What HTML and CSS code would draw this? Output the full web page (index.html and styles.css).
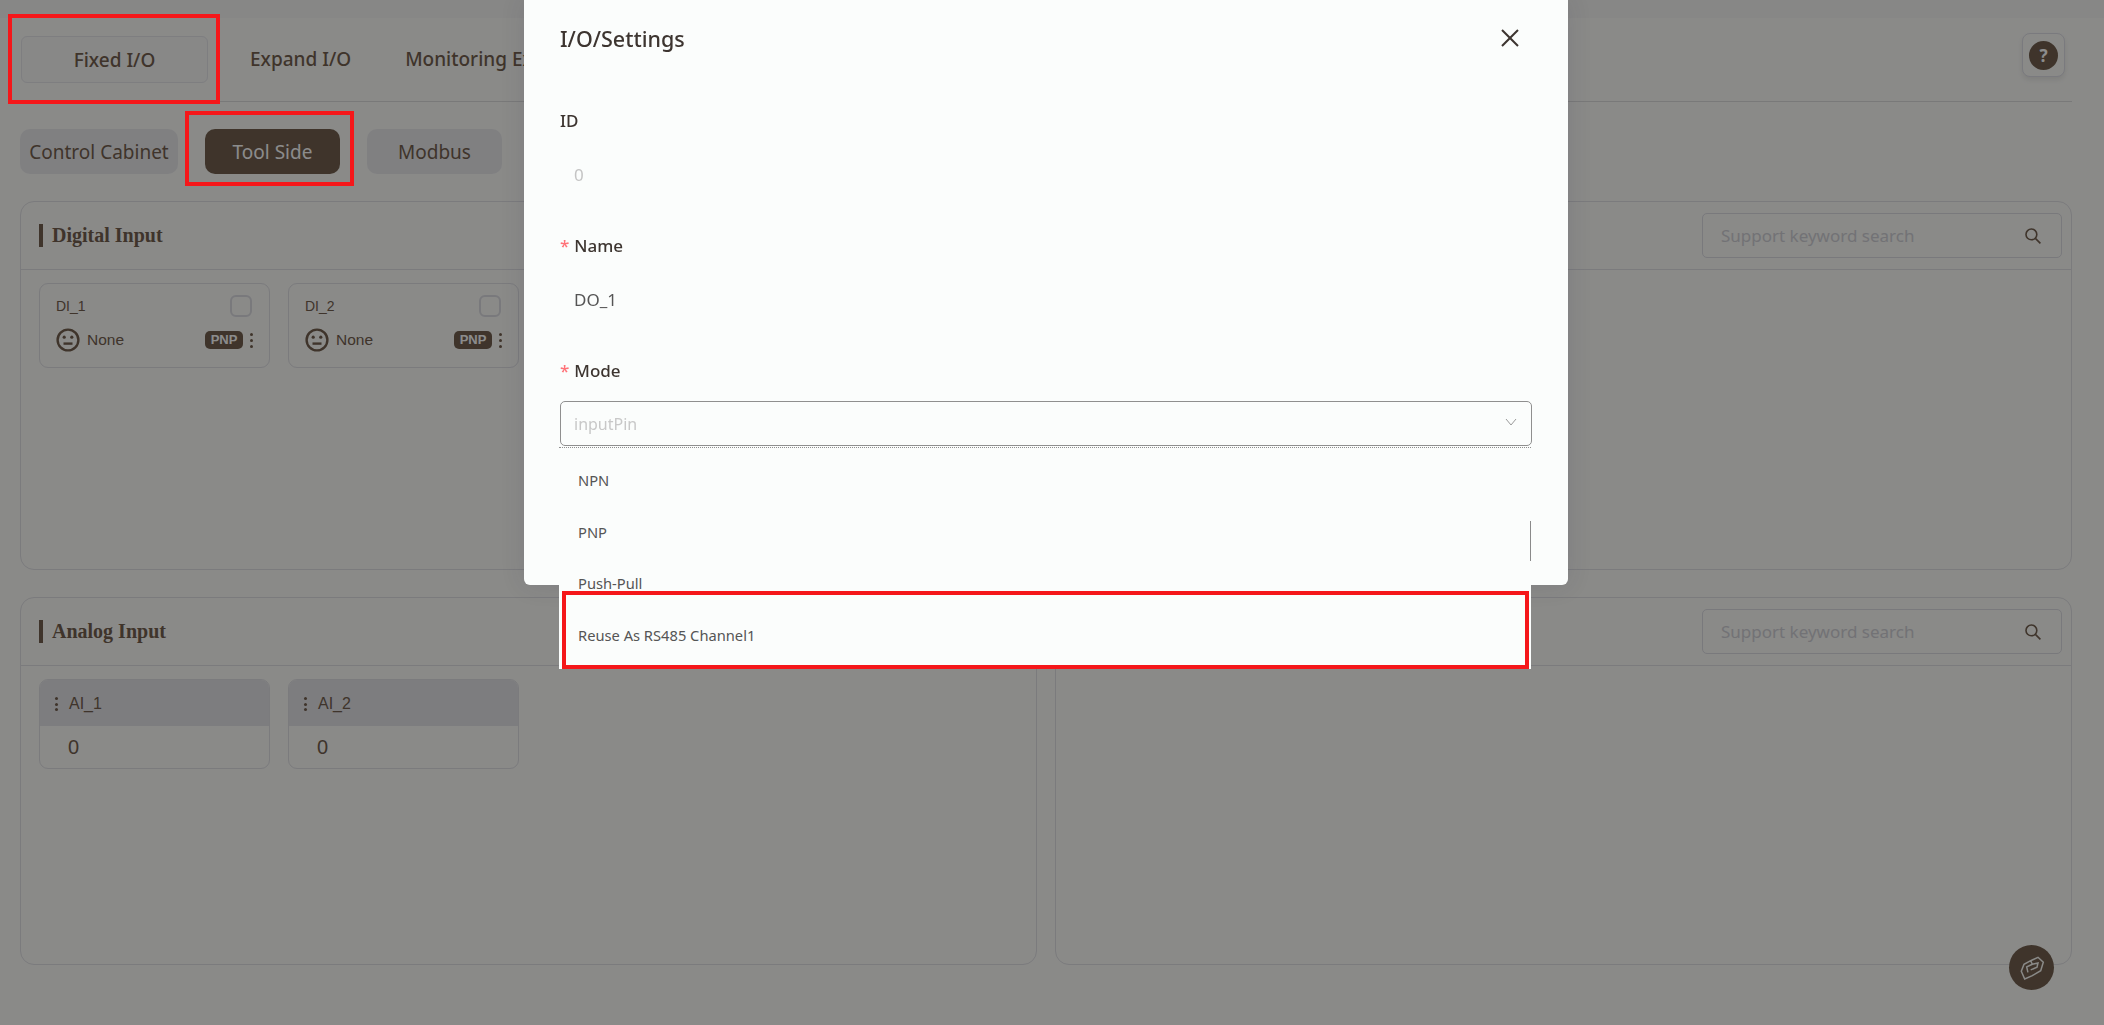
FILE: index.html
```html
<!DOCTYPE html>
<html lang="en">
<head>
    <meta charset="UTF-8">
    <title>I/O Settings</title>
    <link rel="stylesheet" href="styles.css">
</head>
<body>

    <div class="top-strip"></div>

    <main class="page">
        <!-- Main tabs -->
        <div class="tabs">
            <div class="tab tab-active">Fixed I/O</div>
            <div class="tab tab-first">Expand I/O</div>
            <div class="tab">Monitoring Expansion</div>
            <div class="help-btn"><span class="help-icon">?</span></div>
        </div>

        <!-- Sub tabs -->
        <div class="subtabs">
            <div class="subtab subtab-wide">Control Cabinet</div>
            <div class="subtab subtab-active">Tool Side</div>
            <div class="subtab">Modbus</div>
        </div>

        <div class="panels">
            <section class="panel">
                <div class="panel-head">
                    <h3 class="panel-title">Digital Input</h3>
                </div>
                <div class="cards">
                    <div class="card">
                        <div class="card-row">
                            <span>DI_1</span>
                            <span class="checkbox"></span>
                        </div>
                        <div class="card-row card-row-low">
                            <svg class="face" viewBox="0 0 24 24"><circle cx="12" cy="12" r="10.4"/><circle class="eye" cx="8.2" cy="9.2" r="1.6"/><circle class="eye" cx="15.8" cy="9.2" r="1.6"/><path d="M7.5 15.6h9"/></svg>
                            <span class="none">None</span>
                            <span class="badge">PNP</span>
                            <span class="kebab"><i></i><i></i><i></i></span>
                        </div>
                    </div>
                    <div class="card">
                        <div class="card-row">
                            <span>DI_2</span>
                            <span class="checkbox"></span>
                        </div>
                        <div class="card-row card-row-low">
                            <svg class="face" viewBox="0 0 24 24"><circle cx="12" cy="12" r="10.4"/><circle class="eye" cx="8.2" cy="9.2" r="1.6"/><circle class="eye" cx="15.8" cy="9.2" r="1.6"/><path d="M7.5 15.6h9"/></svg>
                            <span class="none">None</span>
                            <span class="badge">PNP</span>
                            <span class="kebab"><i></i><i></i><i></i></span>
                        </div>
                    </div>
                </div>
            </section>

            <section class="panel">
                <div class="panel-head panel-head-end">
                    <div class="search">
                        <span class="search-text">Support keyword search</span>
                        <svg class="search-icon" viewBox="0 0 18 18"><circle cx="7.4" cy="7.4" r="5.4"/><path d="M11.4 11.4l5 5"/></svg>
                    </div>
                </div>
            </section>

            <section class="panel">
                <div class="panel-head">
                    <h3 class="panel-title">Analog Input</h3>
                </div>
                <div class="cards">
                    <div class="card card-analog">
                        <div class="analog-head"><span class="kebab kebab-small"><i></i><i></i><i></i></span>AI_1</div>
                        <div class="analog-value">0</div>
                    </div>
                    <div class="card card-analog">
                        <div class="analog-head"><span class="kebab kebab-small"><i></i><i></i><i></i></span>AI_2</div>
                        <div class="analog-value">0</div>
                    </div>
                </div>
            </section>

            <section class="panel">
                <div class="panel-head panel-head-end">
                    <div class="search">
                        <span class="search-text">Support keyword search</span>
                        <svg class="search-icon" viewBox="0 0 18 18"><circle cx="7.4" cy="7.4" r="5.4"/><path d="M11.4 11.4l5 5"/></svg>
                    </div>
                </div>
            </section>
        </div>
    </main>

    <div class="float-btn">
        <svg viewBox="0 0 30 30"><path d="M4.3 18.3 7.7 26l7.6-3.3 8.4-5 2.6-8.4L21 4.3l-7.3 3.4L7 11.3zM13.7 7.7l1.6 3.6-5.6 2.6 1.2 5.4M15.3 11.3l5.7-1.4-1 4.4-6.3 2.6"/></svg>
    </div>

    <div class="mask"></div>

    <!-- Modal -->
    <div class="modal">
        <div class="modal-head">
            <h2 class="modal-title">I/O/Settings</h2>
            <svg class="close" viewBox="0 0 18 18"><path d="M1 1l16 16M17 1 1 17"/></svg>
        </div>
        <div class="field">
            <label class="field-label">ID</label>
            <div class="field-value value-off">0</div>
        </div>
        <div class="field">
            <label class="field-label"><span class="req">*</span>Name</label>
            <div class="field-value">DO_1</div>
        </div>
        <div class="field">
            <label class="field-label"><span class="req">*</span>Mode</label>
            <div class="select">
                <span class="select-text">inputPin</span>
                <svg class="chevron" viewBox="0 0 12 8"><path d="M1 1l5 6 5-6"/></svg>
            </div>
        </div>

        <!-- Mode dropdown -->
        <div class="dropdown">
            <div class="option">NPN</div>
            <div class="option">PNP</div>
            <div class="option">Push-Pull</div>
            <div class="option">Reuse As RS485 Channel1</div>
            <div class="scroll-line"></div>
        </div>
    </div>

    <!-- Red annotation boxes -->
    <div class="mark mark-tab"></div>
    <div class="mark mark-subtab"></div>
    <div class="mark mark-option"></div>

</body>
</html>
```

FILE: styles.css
```css
* {
    box-sizing: border-box;
}
html, body {
    margin: 0;
    height: 100%;
    overflow: hidden;
}
body {
    font-family: "Noto Sans", "Open Sans", sans-serif;
    background-color: #fbfbf8;
    color: #73604f;
}
.top-strip {
    height: 18px;
    background-color: #f6f6f4;
}
.page {
    padding: 18px 32px 0 20px;
}
.tabs {
    display: flex;
    height: 66px;
    padding-bottom: 18px;
    border-bottom: 1px solid #dcdcdc;
}
.tab {
    padding: 0 27px;
    font-size: 19px;
    font-weight: 500;
    line-height: 47px;
    white-space: nowrap;
}
.tab-active {
    width: 187px;
    padding: 0;
    margin-left: 1px;
    text-align: center;
    background-color: #f7f7f6;
    border: 1px solid #e6e6ea;
    border-radius: 6px;
}
.tab-first {
    margin-left: 15px;
}
.help-btn {
    display: flex;
    align-items: center;
    justify-content: center;
    width: 43px;
    height: 44px;
    margin: -3px 7px 0 auto;
    background-color: #fbfbf8;
    border: 1px solid #dedee6;
    border-radius: 8px;
    box-shadow: 0 3px 5px rgba(0, 0, 0, 0.08);
}
.help-icon {
    width: 29px;
    height: 29px;
    line-height: 29px;
    text-align: center;
    font-size: 17px;
    font-weight: 700;
    color: #fff;
    background-color: #73604f;
    border-radius: 50%;
}
.subtabs {
    display: flex;
    gap: 27px;
    margin-top: 27px;
}
.subtab {
    width: 135px;
    height: 45px;
    line-height: 47px;
    text-align: center;
    font-size: 19px;
    background-color: #e9e9ec;
    border-radius: 10px;
}
.subtab-wide {
    width: 158px;
}
.subtab-active {
    color: #fff;
    background-color: #73604f;
}
.panels {
    display: grid;
    grid-template-columns: 1017px 1017px;
    grid-template-rows: 369px 368px;
    column-gap: 18px;
    row-gap: 27px;
    margin-top: 27px;
}
.panel {
    border: 1px solid #e0e0e4;
    border-radius: 14px;
}
.panel-head {
    display: flex;
    align-items: center;
    height: 68px;
    padding: 0 9px 0 18px;
    border-bottom: 1px solid #e0e0e4;
}
.panel-head-end {
    justify-content: flex-end;
}
.panel-title {
    margin: 0;
    padding-left: 9px;
    font-family: "Liberation Serif", serif;
    font-size: 20px;
    font-weight: 700;
    line-height: 23px;
    border-left: 4px solid #73604f;
}
.search {
    display: flex;
    align-items: center;
    justify-content: space-between;
    width: 360px;
    height: 45px;
    padding: 0 19px 0 18px;
    border: 1px solid #dcdce2;
    border-radius: 5px;
}
.search-text {
    font-size: 17px;
    color: #d0d0d6;
}
.search-icon {
    width: 18px;
    height: 18px;
    fill: none;
    stroke: #73604f;
    stroke-width: 1.6;
}
.cards {
    display: flex;
    gap: 18px;
    padding: 13px 18px;
}
.card {
    width: 231px;
    height: 85px;
    padding: 10px 16px 0;
    font-family: "Liberation Sans", sans-serif;
    font-size: 14px;
    border: 1px solid #e0e0e4;
    border-radius: 9px;
}
.card-row {
    display: flex;
    align-items: center;
    justify-content: space-between;
    height: 24px;
}
.card-row-low {
    justify-content: flex-start;
    margin-top: 10px;
}
.checkbox {
    width: 22px;
    height: 22px;
    margin-right: 1px;
    border: 2px solid #dcdce2;
    border-radius: 6px;
}
.face {
    width: 24px;
    height: 24px;
    fill: none;
    stroke: #73604f;
    stroke-width: 2.4;
}
.face .eye {
    fill: #73604f;
    stroke: none;
}
.none {
    margin-left: 7px;
    font-size: 15.5px;
}
.badge {
    width: 38px;
    height: 18px;
    margin-left: auto;
    line-height: 18px;
    text-align: center;
    font-size: 13px;
    font-weight: 700;
    color: #fff;
    background-color: #73604f;
    border-radius: 5px;
}
.kebab {
    display: flex;
    flex-direction: column;
    justify-content: space-between;
    align-items: center;
    width: 3px;
    height: 15px;
    margin-left: 7px;
    margin-right: 0;
}
.kebab i {
    width: 3px;
    height: 3px;
    background-color: #73604f;
    border-radius: 50%;
}
.kebab-small {
    display: inline-flex;
    height: 14px;
    margin: 0 11px 0 0;
}
.card-analog {
    height: 90px;
    padding: 0;
    overflow: hidden;
}
.analog-head {
    display: flex;
    align-items: center;
    height: 46px;
    padding: 2px 0 0 15px;
    font-size: 16px;
    background-color: #e4e4e8;
}
.analog-value {
    padding: 10px 0 0 28px;
    font-size: 20px;
}

.float-btn {
    position: absolute;
    left: 2009px;
    top: 945px;
    display: flex;
    align-items: center;
    justify-content: center;
    width: 45px;
    height: 45px;
    background-color: #73604f;
    border-radius: 50%;
}
.float-btn svg {
    width: 30px;
    height: 30px;
    fill: none;
    stroke: #fbfbf8;
    stroke-width: 1.5;
}
.mask {
    position: fixed;
    inset: 0;
    background-color: rgba(0, 0, 0, 0.45);
}

/* Modal */
.modal {
    position: absolute;
    left: 524px;
    top: 0;
    width: 1044px;
    height: 585px;
    padding: 0 36px;
    color: #3d3530;
    background-color: #fbfdfc;
    border-radius: 0 0 6px 6px;
    box-shadow: 0 0 24px rgba(40, 40, 70, 0.12);
}
.modal-head {
    display: flex;
    align-items: center;
    justify-content: space-between;
    height: 76px;
    margin-bottom: 34px;
    padding-right: 13px;
}
.modal-title {
    margin: 0;
    font-size: 21.5px;
    font-weight: 500;
}
.close {
    width: 18px;
    height: 18px;
    fill: none;
    stroke: #3d3530;
    stroke-width: 2;
}
.field {
    height: 125px;
}
.field-label {
    display: block;
    height: 22px;
    margin-bottom: 19px;
    font-size: 17px;
    font-weight: 500;
    line-height: 22px;
}
.req {
    margin-right: 5px;
    color: #ff7278;
}
.field-value {
    height: 45px;
    padding-left: 14px;
    font-size: 17px;
    line-height: 48px;
    color: #555;
}
.value-off {
    color: #c4c4c4;
}
.select {
    display: flex;
    align-items: center;
    justify-content: space-between;
    height: 45px;
    padding: 0 14px 0 13px;
    border: 1px solid #8f8f8f;
    border-radius: 5px;
}
.select-text {
    font-size: 16px;
    color: #c8c8c8;
}
.chevron {
    width: 12px;
    height: 8px;
    margin-top: -3px;
    fill: none;
    stroke: #9a9a9a;
}
.dropdown {
    position: absolute;
    left: 35px;
    top: 447px;
    width: 972px;
    height: 222px;
    padding: 7px 0 0 19px;
    color: #555;
    background-color: #fbfdfc;
    border-top: 1px dotted #8f8f8f;
}
.option {
    height: 51.5px;
    line-height: 51px;
    font-size: 14.7px;
}
.scroll-line {
    position: absolute;
    right: 0;
    top: 73px;
    width: 1px;
    height: 40px;
    background-color: #8a8a8a;
}

/* Annotations */
.mark {
    position: absolute;
    border: 4px solid #f5171a;
}
.mark-tab {
    left: 8px;
    top: 14px;
    width: 212px;
    height: 90px;
}
.mark-subtab {
    left: 185px;
    top: 111px;
    width: 169px;
    height: 75px;
}
.mark-option {
    left: 562px;
    top: 591px;
    width: 967px;
    height: 78px;
}
```
